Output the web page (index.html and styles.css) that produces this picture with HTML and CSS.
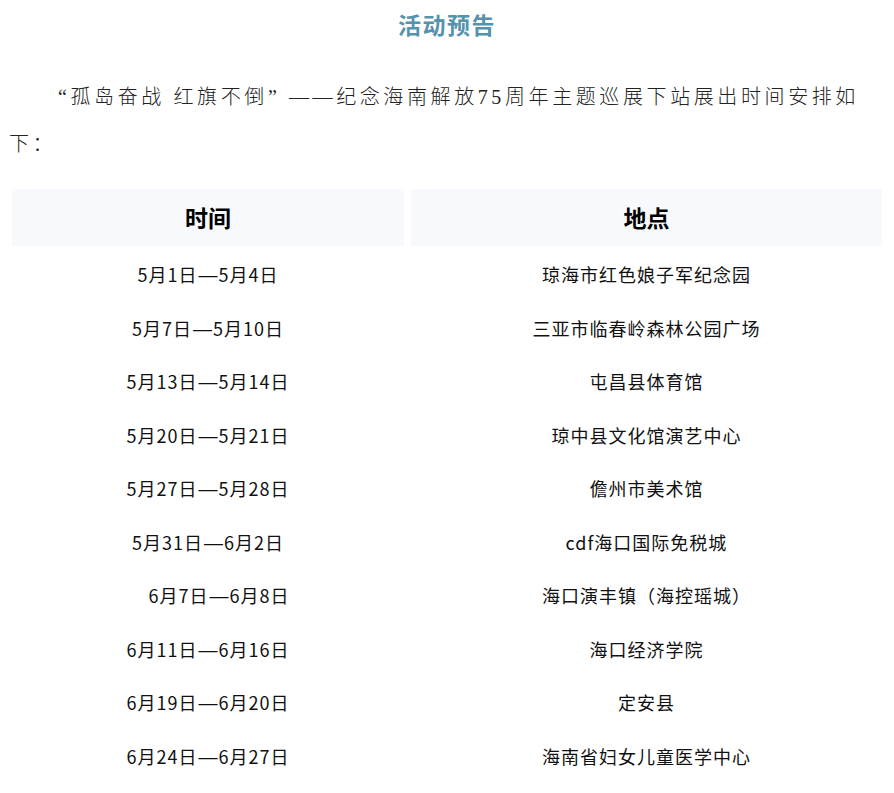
FILE: index.html
```html
<!DOCTYPE html>
<html lang="zh-CN">
<head>
<meta charset="utf-8">
<title>活动预告</title>
<link rel="stylesheet" href="styles.css">
</head>
<body>
<div class="page">
  <h1 class="title">活动预告</h1>
  <p class="intro">“孤岛奋战 红旗不倒” ——纪念海南解放75周年主题巡展下站展出时间安排如下：</p>
  <div class="schedule">
    <div class="head">时间</div>
    <div class="head">地点</div>
    <div class="cell">5月1日<span class="dash">—</span>5月4日</div><div class="cell">琼海市红色娘子军纪念园</div>
    <div class="cell">5月7日<span class="dash">—</span>5月10日</div><div class="cell">三亚市临春岭森林公园广场</div>
    <div class="cell">5月13日<span class="dash">—</span>5月14日</div><div class="cell">屯昌县体育馆</div>
    <div class="cell">5月20日<span class="dash">—</span>5月21日</div><div class="cell">琼中县文化馆演艺中心</div>
    <div class="cell">5月27日<span class="dash">—</span>5月28日</div><div class="cell">儋州市美术馆</div>
    <div class="cell">5月31日<span class="dash">—</span>6月2日</div><div class="cell">cdf海口国际免税城</div>
    <div class="cell shifted">6月7日<span class="dash">—</span>6月8日</div><div class="cell">海口演丰镇（海控瑶城）</div>
    <div class="cell">6月11日<span class="dash">—</span>6月16日</div><div class="cell">海口经济学院</div>
    <div class="cell">6月19日<span class="dash">—</span>6月20日</div><div class="cell">定安县</div>
    <div class="cell">6月24日<span class="dash">—</span>6月27日</div><div class="cell">海南省妇女儿童医学中心</div>
  </div>
</div>
</body>
</html>
```

FILE: styles.css
```css
html, body {
  margin: 0;
  padding: 0;
  background: #ffffff;
}

body {
  font-family: "Noto Sans CJK SC", "Noto Sans", sans-serif;
  color: #111111;
}

.page {
  width: 894px;
}

.title {
  margin: 0;
  padding-top: 8px;
  height: 32px;
  line-height: 32px;
  text-align: center;
  font-size: 23px;
  font-weight: 700;
  letter-spacing: 1.5px;
  color: #5592ae;
}

.intro {
  margin: 34px 0 0;
  padding: 0 9px 0 9px;
  font-family: "Liberation Serif", "Noto Sans CJK SC", serif;
  font-size: 20px;
  font-weight: 300;
  line-height: 47px;
  letter-spacing: 3.6px;
  text-indent: 49px;
  color: #222222;
}

.schedule {
  display: grid;
  grid-template-columns: 392px 471px;
  column-gap: 7px;
  margin: 21px 0 0 12px;
}

.head {
  height: 57px;
  line-height: 57px;
  background: #f8f9fd;
  text-align: center;
  font-size: 23px;
  font-weight: 700;
  color: #000000;
  margin-bottom: 2px;
}

.cell {
  height: 53.5px;
  line-height: 53.5px;
  text-align: center;
  font-size: 18px;
  letter-spacing: 1px;
  color: #111111;
}

.dash {
  font-family: "Liberation Sans", sans-serif;
  font-size: 19px;
  letter-spacing: 0;
  margin: 0 1px;
  position: relative;
  top: -1px;
}

.shifted {
  padding-left: 22px;
}
```
